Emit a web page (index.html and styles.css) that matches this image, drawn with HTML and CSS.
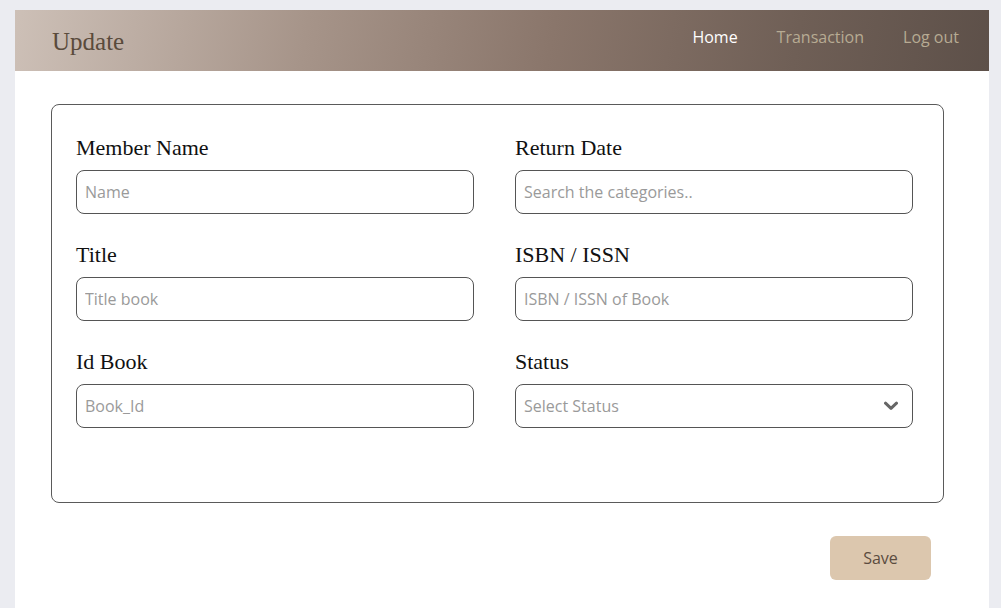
FILE: index.html
```html
<!DOCTYPE html>
<html>
<head>
<meta charset="utf-8">
<link rel="stylesheet" href="styles.css">
</head>
<body>
<div class="page">
  <header class="topbar">
    <div class="brand">Update</div>
    <nav class="nav">
      <a class="nav-link active">Home</a>
      <a class="nav-link">Transaction</a>
      <a class="nav-link">Log out</a>
    </nav>
  </header>
  <main class="content">
    <form class="card">
      <div class="grid">
        <div class="field">
          <label class="label">Member Name</label>
          <input class="input" placeholder="Name">
        </div>
        <div class="field">
          <label class="label">Return Date</label>
          <input class="input" placeholder="Search the categories..">
        </div>
        <div class="field">
          <label class="label">Title</label>
          <input class="input" placeholder="Title book">
        </div>
        <div class="field">
          <label class="label">ISBN / ISSN</label>
          <input class="input" placeholder="ISBN / ISSN of Book">
        </div>
        <div class="field">
          <label class="label">Id Book</label>
          <input class="input" placeholder="Book_Id">
        </div>
        <div class="field">
          <label class="label">Status</label>
          <div class="select">
            <span class="select-text">Select Status</span>
            <svg class="chevron" width="14" height="10" viewBox="0 0 14 10"><path d="M1.5 2.2 L7 7.4 L12.5 2.2" fill="none" stroke="#666" stroke-width="3" stroke-linecap="round" stroke-linejoin="round"/></svg>
          </div>
        </div>
      </div>
    </form>
    <div class="actions">
      <button class="save" type="button">Save</button>
    </div>
  </main>
</div>
</body>
</html>
```
FILE: styles.css
```css
* { box-sizing: border-box; }
html, body { margin: 0; padding: 0; }
body {
  background: #ebecf1;
  height: 608px;
  overflow: hidden;
  padding: 10px 12px 0 15px;
}
.page {
  background: #ffffff;
  height: 100%;
}
.topbar {
  height: 61px;
  display: flex;
  align-items: center;
  justify-content: space-between;
  padding: 0 30px 0 37px;
  background: linear-gradient(100deg, #cdc0b7 0%, #a69489 30%, #8a766b 55%, #6f5f56 80%, #5d5049 100%);
}
.brand {
  font-family: "Liberation Serif", serif;
  font-size: 25px;
  color: #5a4b3c;
  margin-top: 2px;
}
.nav {
  display: flex;
  gap: 39px;
  margin-top: -7px;
}
.nav-link {
  font-family: "Open Sans", sans-serif;
  font-size: 16px;
  color: #b7ab93;
}
.nav-link.active { color: #ffffff; font-weight: 500; margin-right: 0px; }
.content {
  padding: 33px 45px 0 36px;
}
.card {
  border: 1px solid #5a5a5a;
  border-radius: 8px;
  padding: 31px 30px 74px 24px;
  margin: 0;
}
.grid {
  display: grid;
  grid-template-columns: 398px 398px;
  column-gap: 41px;
  row-gap: 29px;
}
.field {
  display: flex;
  flex-direction: column;
}
.label {
  font-family: "Liberation Serif", serif;
  font-size: 22px;
  line-height: 24px;
  color: #111;
  margin-bottom: 10px;
}
.input, .select {
  height: 44px;
  width: 100%;
  border: 1px solid #555;
  border-radius: 8px;
  padding: 0 8px;
  font-family: "Open Sans", sans-serif;
  font-size: 16px;
  color: #333;
  background: #fff;
  outline: none;
}
.input::placeholder { color: #9a9a9a; }
.select {
  display: flex;
  align-items: center;
  justify-content: space-between;
  padding-right: 14px;
}
.select-text { color: #9a9a9a; }
.actions {
  display: flex;
  justify-content: flex-end;
  padding: 33px 13px 0 0;
}
.save {
  width: 101px;
  height: 44px;
  border: none;
  border-radius: 6px;
  background: #dcc7ae;
  font-family: "Open Sans", sans-serif;
  font-size: 16px;
  color: #5b4c3f;
}
```
